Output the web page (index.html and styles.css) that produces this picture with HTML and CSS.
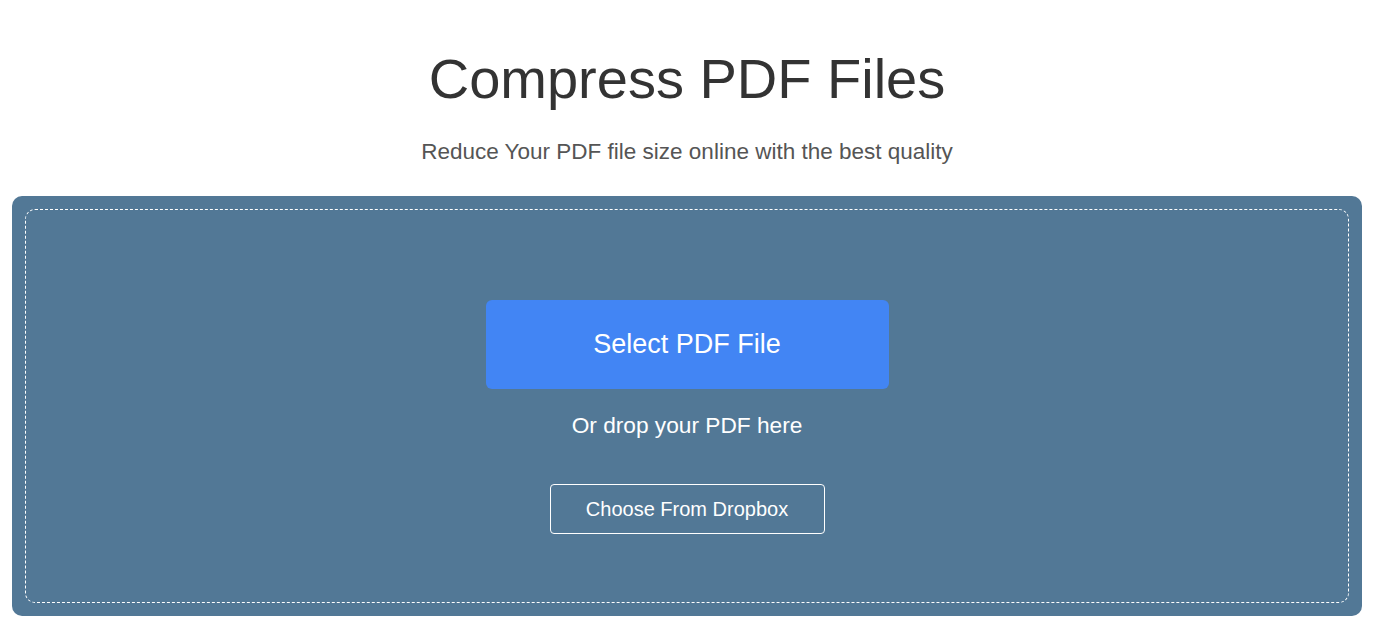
FILE: index.html
```html
<!DOCTYPE html>
<html lang="en">
<head>
<meta charset="utf-8">
<title>Compress PDF Files</title>
<link rel="stylesheet" href="styles.css">
</head>
<body>
<header class="hero">
  <h1 class="title">Compress PDF Files</h1>
  <p class="subtitle">Reduce Your PDF file size online with the best quality</p>
</header>
<section class="uploader">
  <div class="dropzone">
    <button class="select-btn" type="button">Select PDF File</button>
    <p class="drop-hint">Or drop your PDF here</p>
    <button class="dropbox-btn" type="button">Choose From Dropbox</button>
  </div>
</section>
</body>
</html>
```
FILE: styles.css
```css
* { box-sizing: border-box; }
html, body {
  margin: 0;
  padding: 0;
  background: #ffffff;
  font-family: "Liberation Sans", Arial, sans-serif;
}
.hero {
  text-align: center;
  padding-top: 47px;
}
.title {
  margin: 0;
  font-size: 56px;
  line-height: 64px;
  font-weight: 400;
  color: #333333;
}
.subtitle {
  margin: 28px 0 0;
  font-size: 22.5px;
  line-height: 26px;
  color: #555555;
}
.uploader {
  margin: 31px 12px 0;
  background: #527896;
  border-radius: 10px;
  padding: 13px;
  height: 420px;
}
.dropzone {
  height: 100%;
  border: 1px dashed #ffffff;
  border-radius: 10px;
  display: flex;
  flex-direction: column;
  align-items: center;
  padding-top: 90px;
}
.select-btn {
  width: 403px;
  height: 89px;
  border: none;
  border-radius: 6px;
  background: #4285f4;
  color: #ffffff;
  font-family: "Liberation Sans", Arial, sans-serif;
  font-size: 27px;
  cursor: pointer;
}
.drop-hint {
  margin: 23px 0 0;
  font-size: 22.7px;
  line-height: 26px;
  color: #ffffff;
}
.dropbox-btn {
  margin-top: 46px;
  width: 275px;
  height: 50px;
  background: transparent;
  border: 1px solid #ffffff;
  border-radius: 4px;
  color: #ffffff;
  font-family: "Liberation Sans", Arial, sans-serif;
  font-size: 20px;
  cursor: pointer;
}
```
